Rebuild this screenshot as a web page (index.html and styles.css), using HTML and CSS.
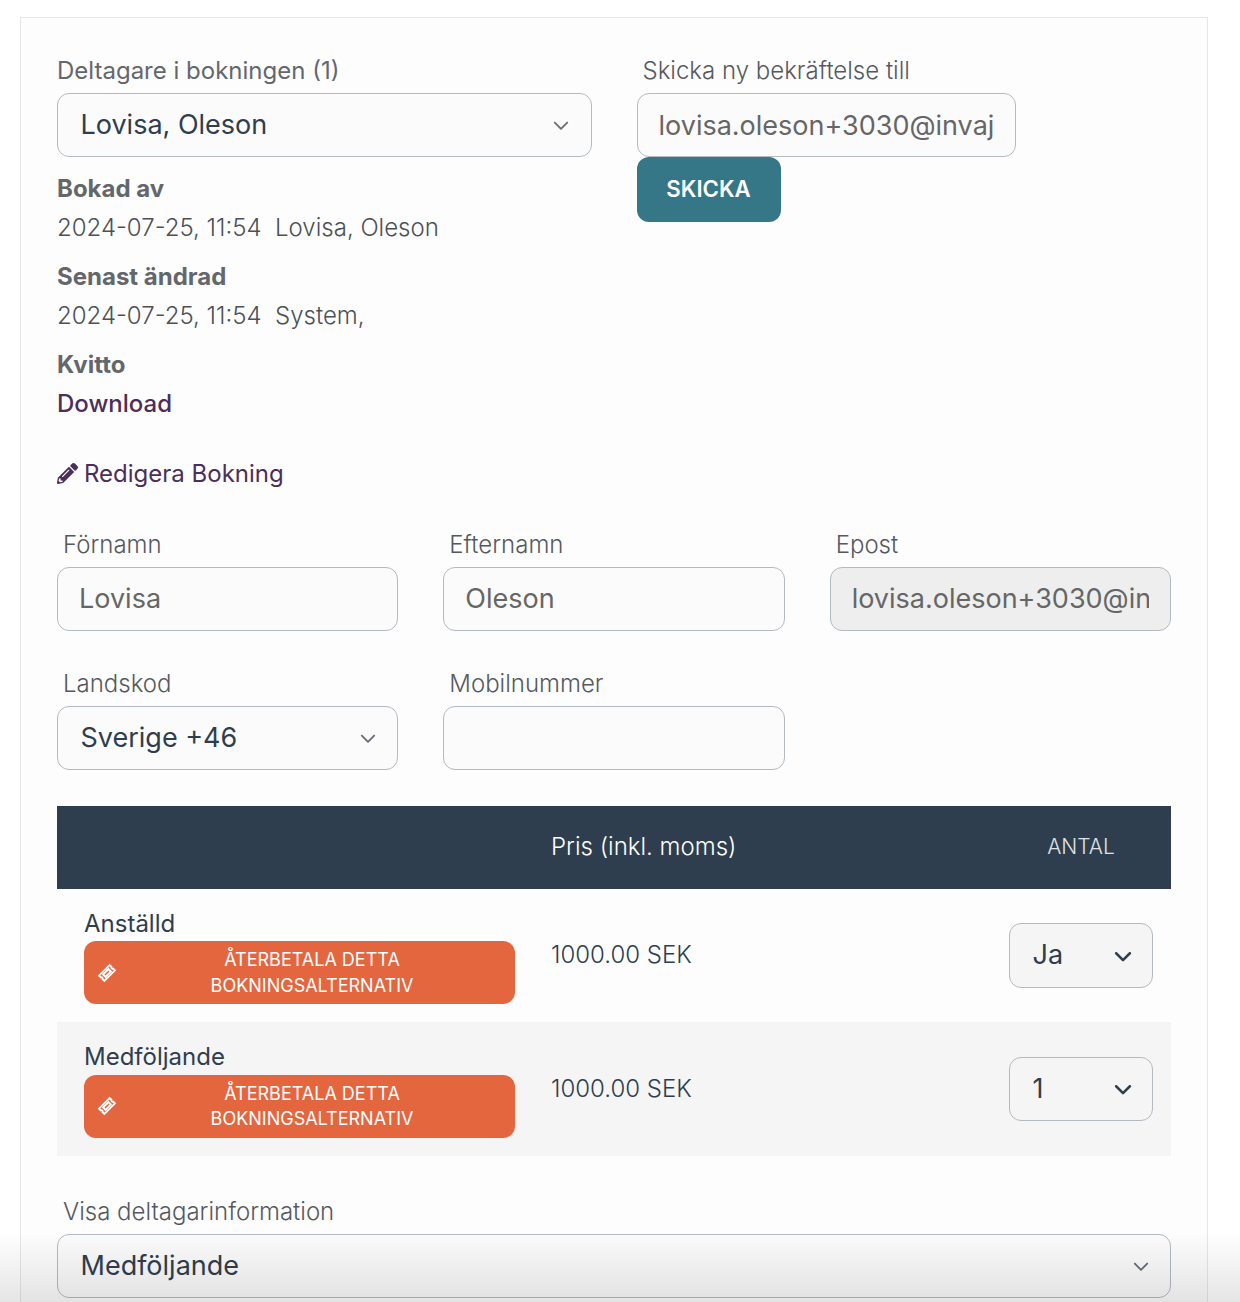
FILE: index.html
```html
<!DOCTYPE html>
<html lang="sv">
<head>
<meta charset="utf-8">
<title>Bokning</title>
<link rel="stylesheet" href="styles.css">
</head>
<body>
<main class="card">
  <section class="top">
    <div class="col-left">
      <label class="label label-flush">Deltagare i bokningen (1)</label>
      <div class="select-wrap">
        <select class="field select"><option>Lovisa, Oleson</option></select>
        <svg class="chev wide" viewBox="0 0 16 16"><path d="M2.5 5l5.5 5.5L13.500 5"/></svg>
      </div>
      <div class="info first"><div class="info-title">Bokad av</div><div class="info-text">2024-07-25, 11:54&nbsp; Lovisa, Oleson</div></div>
      <div class="info"><div class="info-title">Senast ändrad</div><div class="info-text">2024-07-25, 11:54&nbsp; System,</div></div>
      <div class="info"><div class="info-title">Kvitto</div><a class="download" href="#">Download</a></div>
    </div>
    <div class="col-right">
      <label class="label">Skicka ny bekräftelse till</label>
      <input class="field input confirm-input" value="lovisa.oleson+3030@invajo.com">
      <button class="send">SKICKA</button>
    </div>
  </section>

  <a class="edit" href="#">
    <svg class="pencil" viewBox="0 0 512 512"><path d="M497.900 142.100l-46.100 46.100c-4.700 4.700-12.300 4.700-17 0l-111-111c-4.700-4.700-4.700-12.300 0-17l46.100-46.100c18.700-18.700 49.100-18.700 67.900 0l60.100 60.100c18.800 18.700 18.800 49.100 0 67.900zM284.200 99.800L21.600 362.400.4 483.900c-2.900 16.400 11.400 30.600 27.800 27.800l121.500-21.300 262.600-262.600c4.700-4.700 4.700-12.300 0-17l-111-111c-4.800-4.700-12.400-4.700-17.100 0zM124.100 339.900c-5.500-5.500-5.500-14.300 0-19.800l154-154c5.500-5.500 14.300-5.500 19.800 0s5.500 14.300 0 19.800l-154 154c-5.500 5.500-14.300 5.500-19.800 0zM88 424h48v36.300l-64.500 11.300-31.100-31.100L51.700 376H88v48z"/></svg>
    Redigera Bokning
  </a>

  <section class="form-grid">
    <div><label class="label">Förnamn</label><input class="field input" value="Lovisa"></div>
    <div><label class="label">Efternamn</label><input class="field input" value="Oleson"></div>
    <div><label class="label">Epost</label><input class="field input disabled" value="lovisa.oleson+3030@invajo.com" disabled></div>
    <div>
      <label class="label">Landskod</label>
      <div class="select-wrap">
        <select class="field select"><option>Sverige +46</option></select>
        <svg class="chev" viewBox="0 0 16 16"><path d="M2.5 5l5.5 5.500L13.500 5"/></svg>
      </div>
    </div>
    <div><label class="label">Mobilnummer</label><input class="field input" value=""></div>
  </section>

  <table class="tickets">
    <colgroup><col class="c-name"><col class="c-price"><col class="c-qty"></colgroup>
    <thead>
      <tr><th></th><th class="th-price">Pris (inkl. moms)</th><th class="th-qty">ANTAL</th></tr>
    </thead>
    <tbody>
      <tr>
        <td class="td-name">
          <div class="name">Anställd</div>
          <button class="refund">
            <svg class="ticket" viewBox="0 0 24 24"><g transform="rotate(-45 12 12)"><path d="M3 7.500h18v3a1.600 1.600 0 0 0 0 3v3H3v-3a1.600 1.600 0 0 0 0-3z"/><path d="M7.500 10h9v4h-9z"/></g></svg>
            <span>ÅTERBETALA DETTA BOKNINGSALTERNATIV</span>
          </button>
        </td>
        <td class="td-price">1000.00 SEK</td>
        <td class="td-qty"><div class="select-wrap qty"><select class="field select small tall"><option>Ja</option></select><svg class="chev dark" viewBox="0 0 16 16"><path d="M2.500 5l5.500 5.500L13.500 5"/></svg></div></td>
      </tr>
      <tr class="alt">
        <td class="td-name">
          <div class="name">Medföljande</div>
          <button class="refund">
            <svg class="ticket" viewBox="0 0 24 24"><g transform="rotate(-45 12 12)"><path d="M3 7.500h18v3a1.600 1.600 0 0 0 0 3v3H3v-3a1.600 1.600 0 0 0 0-3z"/><path d="M7.500 10h9v4h-9z"/></g></svg>
            <span>ÅTERBETALA DETTA BOKNINGSALTERNATIV</span>
          </button>
        </td>
        <td class="td-price">1000.00 SEK</td>
        <td class="td-qty"><div class="select-wrap qty"><select class="field select small"><option>1</option></select><svg class="chev dark" viewBox="0 0 16 16"><path d="M2.500 5l5.500 5.500L13.500 5"/></svg></div></td>
      </tr>
    </tbody>
  </table>

  <section class="visa">
    <label class="label">Visa deltagarinformation</label>
    <div class="select-wrap">
      <select class="field select"><option>Medföljande</option></select>
      <svg class="chev" viewBox="0 0 16 16"><path d="M2.500 5l5.500 5.500L13.500 5"/></svg>
    </div>
  </section>
</main>
<div class="fade"></div>
</body>
</html>
```
FILE: styles.css
```css
* { box-sizing: border-box; }
html, body { height: 100%; overflow: hidden; }
body {
  margin: 0;
  background: #fff;
  font-family: Inter, "Liberation Sans", sans-serif;
  color: #2f3e4e;
  padding: 17px 32px 0 20px;
}
.card {
  background: #fdfdfd;
  border: 1px solid #e6e6e6;
  border-bottom: 0;
  padding: 35px 36px 0;
  min-height: 1400px;
}
.top { display: flex; gap: 45px; height: 383px; }
.col-left { width: 534.5px; }
.col-right { width: 379px; }
.label {
  display: block;
  font-size: 24px;
  font-weight: 300;
  line-height: 36px;
  height: 40px;
  color: #55595e;
  padding-left: 6px;
}
.label-flush { padding-left: 0; font-weight: 400; color: #63676c; }
.field {
  display: block;
  width: 100%;
  height: 64px;
  border: 1px solid #b4bac2;
  border-radius: 12px;
  background: #fbfbfb;
  font-family: inherit;
  font-size: 27px;
  color: #2f3e4e;
  outline: none;
}
.input { padding: 0 21px 2px; color: #666; }
.confirm-input { padding-bottom: 0; }
.select { appearance: none; padding: 0 60px 2px 22.5px; }
.select-wrap { position: relative; }
.chev {
  position: absolute;
  right: 21px;
  top: 50%;
  width: 18px;
  height: 18px;
  margin-top: -8px;
  fill: none;
  stroke: #6a7077;
  stroke-width: 1.7;
  stroke-linecap: round;
  stroke-linejoin: round;
}
.chev.wide { right: 22px; }
.chev.dark { right: 20px; width: 20px; height: 20px; margin-top: -9px; stroke: #2f3e4e; stroke-width: 2; }
.info { margin-top: 9px; }
.info.first { margin-top: 14px; }
.info-title { font-size: 24px; line-height: 36px; font-weight: 700; color: #63676c; height: 39px; }
.info-text { font-size: 24px; font-weight: 300; line-height: 36px; color: #4c5156; height: 40px; }
.download { display: block; font-size: 24px; line-height: 36px; font-weight: 500; color: #4b2e5a; text-decoration: none; }
.send {
  display: block;
  width: 144px;
  height: 65px;
  border: 0;
  border-radius: 12px;
  background: #357787;
  color: #fff;
  font-family: inherit;
  font-size: 22.2px;
  font-weight: 600;
  padding: 0 0 2px;
}
.edit {
  display: flex;
  align-items: center;
  gap: 6px;
  margin-top: 19px;
  height: 36px;
  font-size: 24px;
  color: #4b2e5a;
  text-decoration: none;
}
.pencil { width: 21px; height: 21px; fill: #4b2e5a; }
.form-grid {
  display: grid;
  grid-template-columns: repeat(3, 1fr);
  column-gap: 45px;
  row-gap: 35px;
  margin-top: 36px;
}
.disabled { background: #eee; }
.tickets {
  width: 100%;
  margin-top: 36px;
  border-collapse: collapse;
  table-layout: fixed;
}
.c-name { width: 467px; }
.c-qty { width: 180px; }
.tickets thead tr { background: #2f3e4e; color: #fff; height: 83px; }
.tickets th { padding: 0 0 2px; font-weight: 300; }
.th-price { text-align: left; font-size: 24px; padding-left: 27px !important; color: #fff; }
.th-qty { font-size: 21px; color: #dfe2e5; text-align: center; }
.tickets tbody tr { height: 133px; }
.tickets tbody tr.alt { height: 134px; }
.tickets td { padding: 0; vertical-align: middle; }
.alt { background: #f5f5f5; }
.td-name { padding-left: 27px !important; padding-bottom: 0; }
.name { font-size: 24px; line-height: 34px; height: 34px; }
.alt .name { line-height: 32px; }
.refund {
  display: flex;
  align-items: center;
  width: 431px;
  height: 63px;
  border: 0;
  border-radius: 12px;
  background: #e4663f;
  color: #fff;
  font-family: inherit;
  font-size: 18px;
  line-height: 25.500px;
  padding: 0 8px 0 13px;
  text-align: center;
}
.refund span { flex: 1; padding: 0 36px; }
.ticket { width: 20px; height: 20px; fill: none; stroke: #fff; stroke-width: 2.200; flex: none; }
.td-price { padding: 0 0 2px 27px !important; font-size: 24px; font-weight: 300; color: #2f3e4e; }
.td-qty { padding: 0 18px !important; }
.qty .field { background: #f5f5f5; }
.qty .tall { height: 65px; }
.visa { margin-top: 38px; }
.fade {
  position: absolute;
  left: 0;
  right: 0;
  top: 1232px;
  height: 70px;
  background: linear-gradient(rgba(0,0,0,0), rgba(0,0,0,.1));
  pointer-events: none;
}
```
